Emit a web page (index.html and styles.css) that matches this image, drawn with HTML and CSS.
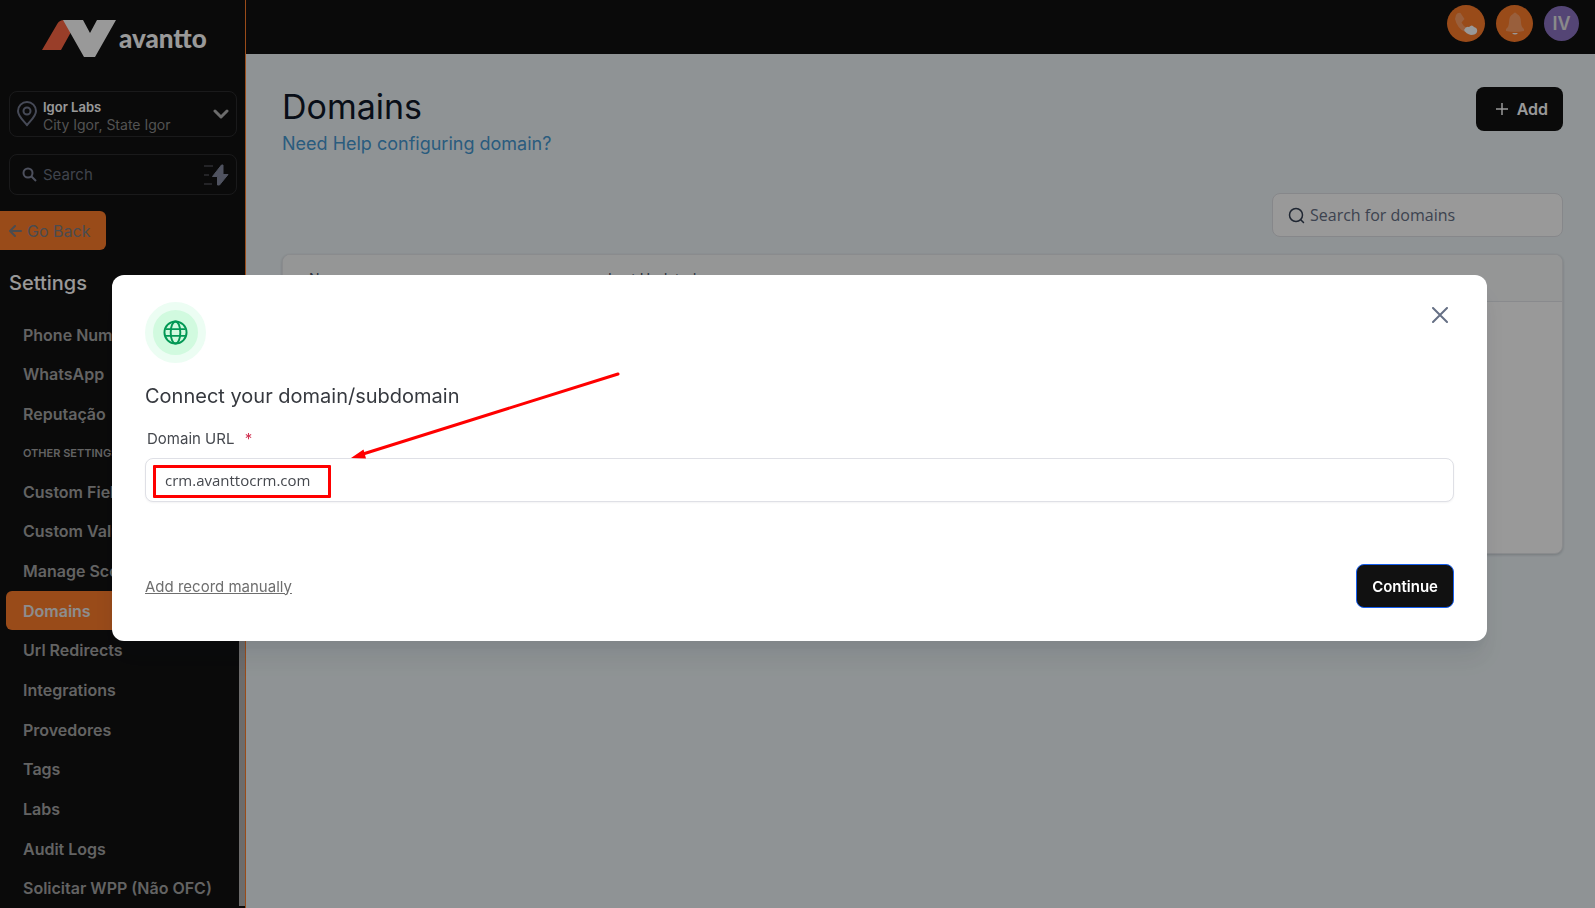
FILE: index.html
```html
<!DOCTYPE html>
<html lang="en">
<head>
<meta charset="utf-8">
<title>Domains</title>
<link rel="stylesheet" href="styles.css">
</head>
<body>
<div class="app">
  <aside class="sidebar">
    <div class="brand">
      <svg class="brand-mark" width="75" height="38" viewBox="0 0 75 38" aria-hidden="true">
        <path d="M0 30 15.500 3.500Q17.500 0 22 0L29 12 19 30Z" fill="#ff6845"/>
        <path d="M21 0H41L48 13 55 0H74L53 37H42Z" fill="#fff"/>
      </svg>
      <span class="brand-name">avantto</span>
    </div>

    <button class="location" type="button">
      <svg width="22" height="26" viewBox="0 0 22 26" fill="none" stroke="#767c92" stroke-width="2" aria-hidden="true">
        <path d="M11 24C6 18 2 15 2 10a9 9 0 0 1 18 0c0 5-4 8-9 14Z"/><circle cx="11" cy="10" r="3.500"/>
      </svg>
      <span class="location-text"><span class="location-name">Igor Labs</span><span class="location-city">City Igor, State Igor</span></span>
      <svg width="16" height="10" viewBox="0 0 16 10" fill="none" stroke="#b4b4b4" stroke-width="3" stroke-linecap="round" stroke-linejoin="round" aria-hidden="true"><path d="m2 2 6 6 6-6"/></svg>
    </button>

    <label class="quick">
      <svg width="15" height="15" viewBox="0 0 15 15" fill="none" stroke="#80869b" stroke-width="2" aria-hidden="true"><circle cx="6" cy="6" r="4.500"/><path d="m9.500 9.500 4.500 4.500"/></svg>
      <input class="quick-input" type="text" placeholder="Search" aria-label="Search">
      <svg width="26" height="22" viewBox="0 0 26 22" aria-hidden="true"><path d="M1 2h9M1 11h5M1 20h8" stroke="#3c3d42" stroke-width="2"/><path d="M18.500 1 9.500 12.500h5V21h2L25 10.500h-5V1Z" fill="#858ba0" stroke="#858ba0" stroke-linejoin="round"/></svg>
    </label>

    <button class="back" type="button">
      <svg width="13" height="12" viewBox="0 0 13 12" fill="none" stroke="currentColor" stroke-width="2" stroke-linecap="round" stroke-linejoin="round" aria-hidden="true"><path d="M12 6H1m5-5L1 6l5 5"/></svg>
      Go Back
    </button>

    <h2 class="side-title">Settings</h2>

    <div class="side-scroll">
      <nav class="nav">
        <a class="nav-link" href="#">Phone Numbers</a>
        <a class="nav-link" href="#">WhatsApp</a>
        <a class="nav-link" href="#">Reputação</a>
        <div class="nav-heading">OTHER SETTINGS</div>
        <a class="nav-link" href="#">Custom Fields</a>
        <a class="nav-link" href="#">Custom Values</a>
        <a class="nav-link" href="#">Manage Scoring</a>
        <a class="nav-link nav-link-active" href="#">Domains</a>
        <a class="nav-link" href="#">Url Redirects</a>
        <a class="nav-link" href="#">Integrations</a>
        <a class="nav-link" href="#">Provedores</a>
        <a class="nav-link" href="#">Tags</a>
        <a class="nav-link" href="#">Labs</a>
        <a class="nav-link" href="#">Audit Logs</a>
        <a class="nav-link" href="#">Solicitar WPP (Não OFC)</a>
      </nav>
      <div class="scroll-thumb"></div>
    </div>
  </aside>

  <div class="page">
    <header class="topbar">
      <button class="round round-phone" type="button" aria-label="Phone">
        <svg width="24" height="24" viewBox="0 0 24 24" aria-hidden="true"><path d="M2 3Q4 0 6.500 1L10.500 7 7.500 10.500Q9 14 13 16L11 20Q3 16 1 7Z" fill="#ffb083" fill-opacity=".65"/><path d="M10 18q2-4 5-3 3-3 5 0 4 1 3 5-1 3-6 3-5-1-7-5Z" fill="#fff"/></svg>
      </button>
      <button class="round" type="button" aria-label="Notifications">
        <svg width="20" height="24" viewBox="0 0 20 24" aria-hidden="true"><path d="M8 2q2-3 4 0 4 2 4 8 0 5 3 7v2q-9 2-18 0v-2q3-2 3-7 0-6 4-8Z" fill="#ffb083" fill-opacity=".65"/><path d="M7 21h6q-3 3-6 0Z" fill="#fff"/></svg>
      </button>
      <button class="round round-user" type="button">IV</button>
    </header>

    <main class="content">
      <div class="heading-row">
        <div>
          <h1 class="title">Domains</h1>
          <a class="help" href="#">Need Help configuring domain?</a>
        </div>
        <button class="btn btn-add" type="button">
          <svg width="12" height="12" viewBox="0 0 12 12" stroke="currentColor" stroke-width="1.500" aria-hidden="true"><path d="M6 0v12M0 6h12"/></svg>
          Add
        </button>
      </div>

      <label class="filter">
        <svg width="17" height="17" viewBox="0 0 17 17" fill="none" stroke="#344054" stroke-width="1.500" stroke-linecap="round" aria-hidden="true"><circle cx="8" cy="8" r="6.500"/><path d="m13 13 2.500 2.500"/></svg>
        <input class="filter-input" type="text" placeholder="Search for domains" aria-label="Search for domains">
      </label>

      <div class="card">
        <table class="table">
          <thead><tr><th class="col-name">Name</th><th>Last Updated</th></tr></thead>
        </table>
      </div>
    </main>
  </div>
</div>

<div class="overlay">
  <form class="modal" role="dialog" aria-labelledby="dlg-title">
    <div class="modal-top">
      <span class="badge">
        <svg width="25" height="25" viewBox="0 0 26 26" fill="none" stroke="#039855" stroke-width="2" aria-hidden="true"><circle cx="13" cy="13" r="11.500"/><ellipse cx="13" cy="13" rx="5" ry="11.500"/><path d="M2.500 9.500h21M2.500 16.500h21"/></svg>
      </span>
      <button class="close" type="button" aria-label="Close">
        <svg width="16" height="16" viewBox="0 0 16 16" stroke="#667085" stroke-width="2" stroke-linecap="round" aria-hidden="true"><path d="m1 1 14 14M15 1 1 15"/></svg>
      </button>
    </div>
    <h2 class="modal-title" id="dlg-title">Connect your domain/subdomain</h2>
    <label class="field-label" for="domain-url">Domain URL <span class="required">*</span></label>
    <input class="field-input" id="domain-url" type="text" value="crm.avanttocrm.com">
    <div class="modal-foot">
      <a class="manual" href="#">Add record manually</a>
      <button class="btn btn-continue" type="button">Continue</button>
    </div>
    <div class="mark-box"></div>
    <svg class="mark-arrow" width="270" height="90" viewBox="0 0 270 90" aria-hidden="true"><path d="M267 2 12 82" stroke="#f00" stroke-width="3" stroke-linecap="round"/><path d="M0 86 12.500 77.500 15 86.500Z" fill="#f00"/></svg>
  </form>
</div>
</body>
</html>
```

FILE: styles.css
```css
* { box-sizing: border-box; }

body {
  margin: 0;
  font-family: Inter, "Liberation Sans", sans-serif;
  font-size: 16px;
  color: #101828;
}

button, input { font: inherit; }
button { border: 0; cursor: pointer; }
a { color: inherit; text-decoration: none; }
h1, h2 { margin: 0; font-weight: 400; }
svg { flex: none; }

.app { display: flex; height: 100vh; min-height: 880px; overflow: hidden; }

/* Sidebar */
.sidebar {
  display: flex;
  flex-direction: column;
  flex: none;
  width: 246px;
  background: #111;
  border-right: 1px solid #ff7d2b;
}

.brand { display: flex; gap: 2px; padding: 20px 0 0 42px; height: 91px; }
.brand-name {
  font-family: Lato, sans-serif;
  font-weight: 900;
  font-size: 26px;
  line-height: 36px;
  color: #fff;
}

.location, .quick {
  display: flex;
  align-items: center;
  margin: 0 8px 0 9px;
  border: 1px solid #2c2c2e;
  border-radius: 8px;
  background: #111;
}
.location { height: 46px; gap: 5px; padding: 0 7px 0 6px; text-align: left; }
.location-text { display: flex; flex-direction: column; flex: 1; padding-top: 3px; }
.location-name { font-size: 13px; line-height: 17px; font-weight: 600; color: #fff; }
.location-city { font-size: 14px; line-height: 17px; color: #8a8a8a; }

.quick { height: 41px; margin-top: 17px; gap: 6px; padding: 0 7px 0 12px; }
.quick-input {
  flex: 1;
  min-width: 0;
  padding: 0;
  border: 0;
  background: none;
  color: #fff;
  font-size: 15px;
}
.quick-input::placeholder { color: #6b7280; opacity: 1; }

.back {
  display: flex;
  align-items: center;
  align-self: flex-start;
  gap: 5px;
  height: 39px;
  margin-top: 16px;
  padding: 0 16px 0 9px;
  border-radius: 0 6px 6px 0;
  background: #ff7d2b;
  color: #7c7f86;
}

.side-title {
  margin: 19px 9px 0;
  font-size: 20px;
  line-height: 28px;
  font-weight: 500;
  color: #fff;
}

.side-scroll { display: flex; flex: 1; min-height: 0; margin-top: 18px; }
.nav { display: flex; flex-direction: column; flex: 1; padding-left: 6px; }
.nav-link {
  display: flex;
  align-items: center;
  flex: 1;
  padding-left: 17px;
  font-size: 16px;
  font-weight: 600;
  color: #a5a5a5;
  white-space: nowrap;
}
.nav-link-active { background: #ff7d2b; border-radius: 6px; color: #ebebeb; }
.nav-heading {
  padding-left: 17px;
  font-size: 11px;
  line-height: 38px;
  font-weight: 600;
  color: #a5a5a5;
}
.scroll-thumb { width: 6px; margin-bottom: 2px; background: #b5b3b3; }

/* Page */
.page { display: flex; flex-direction: column; flex: 1; min-width: 0; background: #eff6f9; }
.topbar {
  display: flex;
  justify-content: flex-end;
  gap: 11px;
  height: 54px;
  padding: 5px 16px 0 0;
  background: #111;
}
.round {
  display: flex;
  align-items: center;
  justify-content: center;
  width: 37px;
  height: 37px;
  padding: 0;
  border-radius: 50%;
  background: #ff7d2b;
  color: #fff;
}
.round-phone { width: 38px; }
.round-user { width: 35px; height: 35px; margin-top: 1px; background: #8c74c4; color: #e6e6e6; font-size: 18px; font-weight: 600; }

.content { padding: 33px 32px 0 36px; }
.heading-row { display: flex; justify-content: space-between; align-items: flex-start; }
.title { font-size: 34px; line-height: 40px; }
.help { display: block; font-size: 18px; line-height: 34px; color: #4699d3; }

.btn {
  display: flex;
  align-items: center;
  height: 44px;
  border-radius: 8px;
  background: #111;
  color: #fff;
  font-weight: 600;
}
.btn-add { gap: 9px; padding: 0 15px 0 20px; }

.filter {
  display: flex;
  align-items: center;
  gap: 5px;
  width: 291px;
  height: 44px;
  margin: 32px 0 0 auto;
  padding: 0 15px;
  border: 1px solid #dfe1e6;
  border-radius: 8px;
  background: #fff;
}
.filter-input {
  flex: 1;
  min-width: 0;
  padding: 0;
  border: 0;
  background: none;
  font-family: "Open Sans", sans-serif;
}
.filter-input::placeholder { color: #667085; opacity: 1; }

.card {
  height: 300px;
  margin-top: 17px;
  overflow: hidden;
  border: 1px solid #e6e8ec;
  border-radius: 8px;
  background: #fff;
  box-shadow: 0 1px 3px rgba(16, 24, 40, .2);
}
.table { width: 100%; border-collapse: collapse; }
.table th {
  height: 46px;
  padding: 2px 0 0 26px;
  border-bottom: 1px solid #e4e7ec;
  background: #f9fafb;
  font-size: 14px;
  font-weight: 400;
  text-align: left;
  color: #475467;
}
.table .col-name { width: 299px; }

/* Dialog */
.overlay {
  position: fixed;
  inset: 0;
  display: flex;
  align-items: center;
  padding: 8px 108px 0 112px;
  background: rgba(0, 0, 0, .4);
}
.modal {
  position: relative;
  display: flex;
  flex-direction: column;
  flex: 1;
  padding: 27px 33px 33px;
  border-radius: 12px;
  background: #fff;
  box-shadow: 0 20px 24px rgba(16, 24, 40, .08), 0 8px 8px rgba(16, 24, 40, .03);
}
.modal-top { display: flex; justify-content: space-between; align-items: flex-start; }
.badge {
  display: flex;
  align-items: center;
  justify-content: center;
  width: 61px;
  height: 61px;
  border: 8px solid #ecfdf3;
  border-radius: 50%;
  background: #d1fadf;
}
.close { display: flex; margin-top: 1px; padding: 4px 6px; background: none; }
.modal-title { margin-top: 18px; font-size: 20px; line-height: 30px; color: #36393f; }
.field-label { margin: 18px 2px 0; font-size: 15px; line-height: 20px; color: #46494f; }
.required { margin-left: 6px; color: #d03050; }
.field-input {
  width: 100%;
  height: 44px;
  margin-top: 9px;
  padding: 0 19px;
  border: 1px solid #dfe0e6;
  border-radius: 8px;
  background: #fff;
  box-shadow: 0 1px 2px rgba(16, 24, 40, .05);
  font-family: "Open Sans", sans-serif;
  font-size: 15px;
  color: #46494f;
}
.modal-foot { display: flex; justify-content: space-between; align-items: center; margin-top: 62px; }
.manual { font-size: 15px; color: #6e6e6e; text-decoration: underline; }
.btn-continue { padding: 0 15px; border: 1px solid #155eef; font-size: 15px; }

/* Callout drawn over the field */
.mark-box {
  position: absolute;
  left: 41px;
  top: 190px;
  width: 178px;
  height: 33px;
  border: 3px solid #f00;
  border-radius: 1px;
}
.mark-arrow { position: absolute; left: 239px; top: 97px; }
```
